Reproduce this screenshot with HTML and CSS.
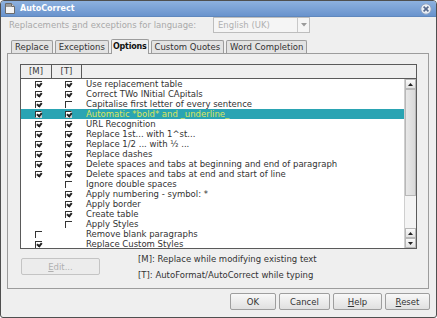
FILE: index.html
```html
<!DOCTYPE html>
<html lang="en">
<head>
    <meta charset="UTF-8">
    <title>AutoCorrect</title>
    <link rel="stylesheet" href="styles.css">
</head>
<body>
    <div class="window">
        <div class="titlebar">
            <svg class="app-icon" width="12" height="13" viewBox="0 0 12 13">
                <path d="M1.5 1.5 H7.5 L10.5 4.5 V11.5 H1.5 Z" fill="#f4f4f4" stroke="#6b6b6b"/>
                <path d="M7.5 1.5 V4.5 H10.5" fill="#cfcfcf" stroke="#6b6b6b"/>
                <rect x="2" y="2" width="5" height="3" fill="#9a9a9a"/>
            </svg>
            <span class="title">AutoCorrect</span>
            <svg class="close" width="12" height="12" viewBox="0 0 12 12">
                <circle cx="6" cy="6" r="5.2" fill="#e9edf3" stroke="#8fa3c2"/>
                <path d="M3.6 3.6 L8.4 8.4 M8.4 3.6 L3.6 8.4" stroke="#56698c" stroke-width="1.6"/>
            </svg>
        </div>

        <div class="lang-row">
            <span class="lang-label">Replacements <u>a</u>nd exceptions for language:</span>
            <div class="combo">
                <span class="combo-text">English (UK)</span>
                <span class="combo-btn">
                    <svg width="6" height="4" viewBox="0 0 6 4"><path d="M0 0 H6 L3 3.5 Z" fill="#9a9a9a"/></svg>
                </span>
            </div>
        </div>

        <div class="tabs">
            <div class="tab">Replace</div>
            <div class="tab">Exceptions</div>
            <div class="tab active">Options</div>
            <div class="tab">Custom Quotes</div>
            <div class="tab">Word Completion</div>
        </div>

        <div class="panel">
            <div class="list">
                <div class="list-head">
                    <div class="head-cell col-m">[M]</div>
                    <div class="head-cell col-t">[T]</div>
                    <div class="head-cell col-rest"></div>
                </div>
                <div class="list-body">
                    <div class="rows">
                        <div class="row"><span class="cb on"></span><span class="cb on"></span><span class="label">Use replacement table</span></div>
                        <div class="row"><span class="cb on"></span><span class="cb on"></span><span class="label">Correct TWo INitial CApitals</span></div>
                        <div class="row"><span class="cb on"></span><span class="cb"></span><span class="label">Capitalise first letter of every sentence</span></div>
                        <div class="row selected"><span class="cb on"></span><span class="cb on"></span><span class="label">Automatic *bold* and _underline_</span></div>
                        <div class="row"><span class="cb on"></span><span class="cb on"></span><span class="label">URL Recognition</span></div>
                        <div class="row"><span class="cb on"></span><span class="cb on"></span><span class="label">Replace 1st... with 1^st...</span></div>
                        <div class="row"><span class="cb on"></span><span class="cb on"></span><span class="label">Replace 1/2 ... with ½ ...</span></div>
                        <div class="row"><span class="cb on"></span><span class="cb on"></span><span class="label">Replace dashes</span></div>
                        <div class="row"><span class="cb on"></span><span class="cb on"></span><span class="label">Delete spaces and tabs at beginning and end of paragraph</span></div>
                        <div class="row"><span class="cb on"></span><span class="cb on"></span><span class="label">Delete spaces and tabs at end and start of line</span></div>
                        <div class="row"><span class="cb none"></span><span class="cb"></span><span class="label">Ignore double spaces</span></div>
                        <div class="row"><span class="cb none"></span><span class="cb on"></span><span class="label">Apply numbering - symbol: *</span></div>
                        <div class="row"><span class="cb none"></span><span class="cb on"></span><span class="label">Apply border</span></div>
                        <div class="row"><span class="cb none"></span><span class="cb on"></span><span class="label">Create table</span></div>
                        <div class="row"><span class="cb none"></span><span class="cb"></span><span class="label">Apply Styles</span></div>
                        <div class="row"><span class="cb"></span><span class="cb none"></span><span class="label">Remove blank paragraphs</span></div>
                        <div class="row"><span class="cb on"></span><span class="cb none"></span><span class="label">Replace Custom Styles</span></div>
                    </div>
                    <div class="scrollbar">
                        <div class="sb-btn"><svg width="5" height="3" viewBox="0 0 5 3"><path d="M0 3 H5 L2.5 0 Z" fill="#222"/></svg></div>
                        <div class="sb-thumb"></div>
                        <div class="sb-track"></div>
                        <div class="sb-btn"><svg width="5" height="3" viewBox="0 0 5 3"><path d="M0 3 H5 L2.5 0 Z" fill="#222"/></svg></div>
                        <div class="sb-btn"><svg width="5" height="3" viewBox="0 0 5 3"><path d="M0 0 H5 L2.5 3 Z" fill="#222"/></svg></div>
                    </div>
                </div>
            </div>

            <div class="panel-bottom">
                <button class="btn edit-btn" disabled><u>E</u>dit...</button>
                <div class="notes">
                    <div>[M]: Replace while modifying existing text</div>
                    <div>[T]: AutoFormat/AutoCorrect while typing</div>
                </div>
            </div>
        </div>

        <div class="footer">
            <button class="btn ok-btn">OK</button>
            <button class="btn cancel-btn">Cancel</button>
            <button class="btn help-btn"><u>H</u>elp</button>
            <button class="btn reset-btn"><u>R</u>eset</button>
        </div>
    </div>
</body>
</html>
```

FILE: styles.css
```css
body {
    margin: 0;
    padding: 0;
    font-family: "DejaVu Sans", sans-serif;
    font-size: 8.5px;
    color: #333333;
    background-color: #ffffff;
}
.window {
    width: 437px;
    height: 318px;
    box-sizing: border-box;
    border: 1px solid #4f4f4f;
    border-radius: 4px 4px 3px 3px;
    background-color: #efefef;
    display: flex;
    flex-direction: column;
    overflow: hidden;
}
.titlebar {
    height: 16px;
    flex-shrink: 0;
    display: flex;
    align-items: center;
    padding: 0 3px 0 3px;
    background: linear-gradient(#8db1df, #6993cd);
    border-bottom: 1px solid #5f87bd;
    box-sizing: border-box;
}
.app-icon {
    margin-right: 4px;
}
.title {
    color: #ffffff;
    font-weight: bold;
    font-size: 8px;
    flex: 1;
}
.close {
    margin-right: 1px;
}
.lang-row {
    height: 16px;
    flex-shrink: 0;
    display: flex;
    align-items: center;
    padding-left: 8px;
}
.lang-label {
    width: 204px;
    color: #a9a9a9;
}
.combo {
    width: 97px;
    height: 16px;
    box-sizing: border-box;
    border: 1px solid #bdbdbd;
    background-color: #f5f5f5;
    display: flex;
    align-items: center;
}
.combo-text {
    flex: 1;
    padding-left: 4px;
    color: #b0b0b0;
}
.combo-btn {
    width: 11px;
    height: 14px;
    border-left: 1px solid #c8c8c8;
    display: flex;
    align-items: center;
    justify-content: center;
}
.tabs {
    height: 20px;
    flex-shrink: 0;
    display: flex;
    align-items: flex-end;
    padding-left: 10px;
    gap: 2px;
}
.tab {
    height: 12px;
    line-height: 12px;
    padding: 0 3px;
    border: 1px solid #9c9c9c;
    border-bottom: none;
    border-radius: 2px 2px 0 0;
    background-color: #e3e3e3;
    color: #333333;
}
.tab.active {
    height: 14px;
    line-height: 13px;
    margin-bottom: -1px;
    padding: 0 1px;
    font-size: 8px;
    font-weight: bold;
    letter-spacing: -0.2px;
    background-color: #efefef;
    position: relative;
    z-index: 1;
    color: #111;
}
.panel {
    height: 236px;
    flex-shrink: 0;
    box-sizing: border-box;
    margin: 0 7px 0 6px;
    border: 1px solid #9c9c9c;
    padding: 10px 11px 0 12px;
}
.list {
    height: 185px;
    box-sizing: border-box;
    border: 1px solid #5a5a5a;
    background-color: #ffffff;
    display: flex;
    flex-direction: column;
}
.list-head {
    height: 14px;
    flex-shrink: 0;
    box-sizing: border-box;
    display: flex;
    border-bottom: 1px solid #5a5a5a;
    background-color: #efefef;
}
.head-cell {
    line-height: 13px;
    text-align: center;
    border-right: 1px solid #5a5a5a;
    color: #3a3a3a;
}
.col-m {
    width: 30px;
}
.col-t {
    width: 29px;
}
.col-rest {
    flex: 1;
    border-right: none;
}
.list-body {
    flex: 1;
    display: flex;
    overflow: hidden;
}
.rows {
    flex: 1;
    overflow: hidden;
}
.row {
    height: 10px;
    display: flex;
    align-items: center;
    padding-left: 14px;
    white-space: nowrap;
}
.row.selected {
    background-color: #2aa4b3;
}
.row.selected .label {
    color: #dbe45c;
}
.cb {
    width: 7px;
    height: 7px;
    box-sizing: border-box;
    border-top: 1px solid #333;
    border-left: 1px solid #333;
    position: relative;
}
.cb:first-child {
    margin-right: 23px;
}
.cb + .cb {
    margin-right: 14px;
}
.cb.none {
    visibility: hidden;
}
.cb.on::after {
    content: "";
    position: absolute;
    left: 1px;
    top: 0px;
    width: 2px;
    height: 3px;
    border-right: 2px solid #222;
    border-bottom: 2px solid #222;
    transform: rotate(40deg);
    transform-origin: 60% 60%;
}
.row.selected .cb {
    background-color: #ffffff;
    border: 1px solid #333;
    border-right-color: #ccc;
    border-bottom-color: #ccc;
}
.label {
    color: #333333;
}
.scrollbar {
    width: 11px;
    flex-shrink: 0;
    display: flex;
    flex-direction: column;
    border-left: 1px solid #cfcfcf;
    background-color: #f2f2f2;
}
.sb-btn {
    height: 10px;
    box-sizing: border-box;
    border: 1px solid #b8b8b8;
    background: linear-gradient(#fafafa, #e2e2e2);
    display: flex;
    align-items: center;
    justify-content: center;
}
.sb-thumb {
    height: 107px;
    box-sizing: border-box;
    border: 1px solid #b8b8b8;
    background: linear-gradient(90deg, #e8e8e8, #d9d9d9);
}
.sb-track {
    flex: 1;
    background-color: #f4f4f4;
}
.panel-bottom {
    display: flex;
    padding-left: 1px;
}
.btn {
    font-family: "DejaVu Sans", sans-serif;
    font-size: 8.5px;
    height: 17px;
    padding: 0;
    border: 1px solid #9e9e9e;
    border-radius: 2px;
    background: linear-gradient(#f8f8f8, #e0e0e0);
    color: #333333;
}
.edit-btn {
    width: 79px;
    margin-top: 9px;
    border-color: #c4c4c4;
    background: #ececec;
    color: #b0b0b0;
}
.notes {
    margin-top: 2px;
    margin-left: 38px;
    line-height: 16px;
}
.footer {
    display: flex;
    justify-content: flex-end;
    padding: 4px 6px 0 0;
    gap: 3px;
}
.ok-btn {
    width: 46px;
}
.cancel-btn {
    width: 51px;
}
.help-btn {
    width: 49px;
}
.reset-btn {
    width: 45px;
}
```
